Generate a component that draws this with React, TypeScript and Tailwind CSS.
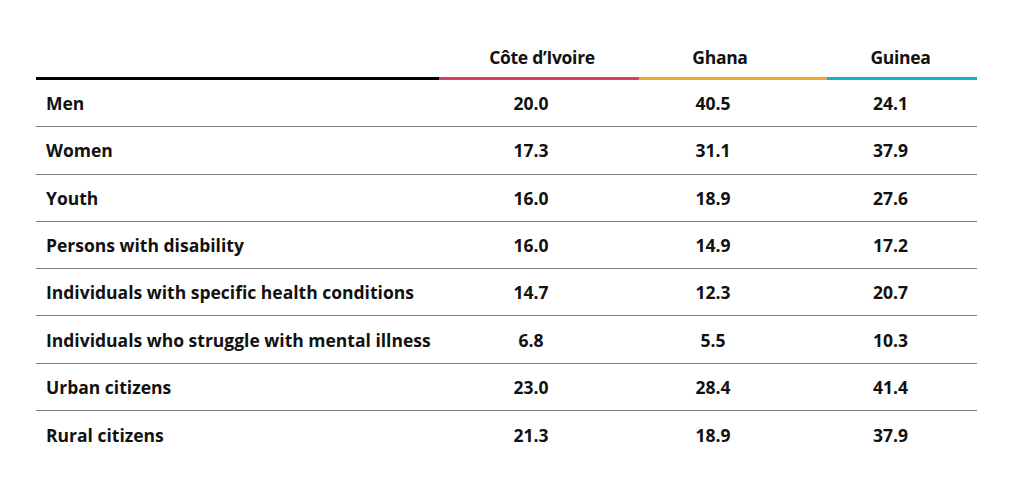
const rows: [string, string, string, string][] = [
  ["Men", "20.0", "40.5", "24.1"],
  ["Women", "17.3", "31.1", "37.9"],
  ["Youth", "16.0", "18.9", "27.6"],
  ["Persons with disability", "16.0", "14.9", "17.2"],
  ["Individuals with specific health conditions", "14.7", "12.3", "20.7"],
  ["Individuals who struggle with mental illness", "6.8", "5.5", "10.3"],
  ["Urban citizens", "23.0", "28.4", "41.4"],
  ["Rural citizens", "21.3", "18.9", "37.9"],
];

export default function App() {
  return (
    <div
      className="h-[495px] w-[1024px] bg-white pt-[43px] pl-[36px] text-[17.5px] font-bold text-[#111]"
      style={{ fontFamily: "'Open Sans', Lato, sans-serif" }}
    >
      <div className="w-[941px]">
        <div className="grid h-[34px] grid-cols-[404px_182px_182px_173px] items-center pb-[6px] tracking-[-0.3px]">
          <div />
          <div className="pl-[22px] text-center">Côte d’Ivoire</div>
          <div className="pl-[14px] text-center">Ghana</div>
          <div className="pl-[20px] text-center">Guinea</div>
        </div>
        <div className="flex h-[3px]">
          <div className="w-[403px] bg-black" />
          <div className="w-[200px] bg-[#d6415e]" />
          <div className="w-[188px] bg-[#f2a72e]" />
          <div className="w-[150px] bg-[#16b0c2]" />
        </div>
        {rows.map((r, i) => (
          <div
            key={r[0]}
            className={
              "grid h-[47.3px] grid-cols-[404px_182px_182px_173px] items-center " +
              (i < rows.length - 1 ? "border-b border-[#7a7a7a]" : "")
            }
          >
            <div className="pl-[10px]">{r[0]}</div>
            <div className="text-center">{r[1]}</div>
            <div className="text-center">{r[2]}</div>
            <div className="text-center">{r[3]}</div>
          </div>
        ))}
      </div>
    </div>
  );
}
